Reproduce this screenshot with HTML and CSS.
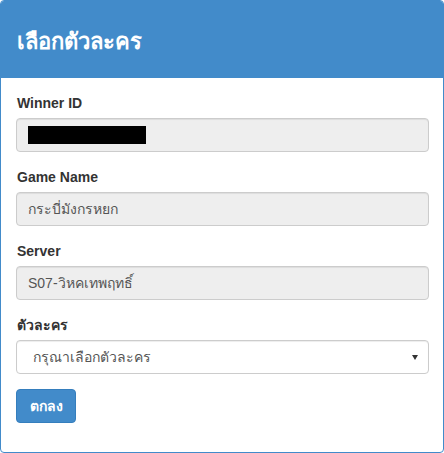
FILE: index.html
```html
<html>
	<head>
		<meta charset="utf-8">
		<title>เลือกตัวละคร</title>
		<link rel="stylesheet" href="styles.css">
	</head>
	<body>
		<div class="panel">
			<div class="panel-heading">
				<h3 class="panel-title">เลือกตัวละคร</h3>
			</div>
			<div class="panel-body">
				<div class="form-group">
					<label>Winner ID</label>
					<div class="form-control readonly"><span class="redacted"></span></div>
				</div>
				<div class="form-group">
					<label>Game Name</label>
					<div class="form-control readonly">กระบี่มังกรหยก</div>
				</div>
				<div class="form-group">
					<label>Server</label>
					<div class="form-control readonly">S07-วิหคเทพฤทธิ์</div>
				</div>
				<div class="form-group">
					<label>ตัวละคร</label>
					<div class="select-wrap">
						<select class="form-control">
							<option>กรุณาเลือกตัวละคร</option>
						</select>
					</div>
				</div>
				<button class="btn">ตกลง</button>
			</div>
		</div>
	</body>
</html>
```

FILE: styles.css
```css
/* page */
body {
	margin: 0;
	background-color: #fff;
	font-family: "Liberation Sans", Tahoma, "DejaVu Sans", sans-serif;
	font-size: 14px;
	color: #333;
}

/* panel */
.panel {
	width: 444px;
	height: 453px;
	box-sizing: border-box;
	border: 1px solid #428bca;
	border-radius: 4px;
	overflow: hidden;
}

.panel-heading {
	height: 77px;
	background-color: #428bca;
	display: flex;
	align-items: center;
	padding: 0 16px;
	box-sizing: border-box;
}

.panel-title {
	margin: 0;
	padding-top: 4px;
	color: #fff;
	font-size: 22px;
	font-weight: bold;
}

.panel-body {
	padding: 15px 14px 15px 15px;
}

/* form */
.form-group {
	margin-bottom: 15px;
}

label {
	display: block;
	font-weight: bold;
	line-height: 20px;
	margin-bottom: 5px;
	padding-left: 1px;
}

.form-control {
	display: block;
	width: 100%;
	height: 34px;
	box-sizing: border-box;
	padding: 6px 11px;
	border: 1px solid #ccc;
	border-radius: 4px;
	background-color: #fff;
	color: #555;
	font-family: inherit;
	font-size: 14px;
	line-height: 20px;
	box-shadow: inset 0 1px 1px rgba(0,0,0,0.075);
}

.form-control.readonly {
	background-color: #eee;
}

.redacted {
	display: inline-block;
	width: 118px;
	height: 18px;
	background-color: #000;
	vertical-align: top;
	margin-top: 1px;
}

.select-wrap {
	position: relative;
}

.select-wrap select {
	-webkit-appearance: none;
	appearance: none;
	padding-left: 16px;
}

.select-wrap::after {
	content: "";
	position: absolute;
	right: 11px;
	top: 15px;
	border-left: 3px solid transparent;
	border-right: 3px solid transparent;
	border-top: 5px solid #333;
	pointer-events: none;
}

/* button */
.btn {
	display: block;
	height: 34px;
	width: 60px;
	padding: 0;
	border: 1px solid #357ebd;
	border-radius: 4px;
	background-color: #428bca;
	color: #fff;
	font-family: inherit;
	font-size: 14px;
	font-weight: bold;
}
```
